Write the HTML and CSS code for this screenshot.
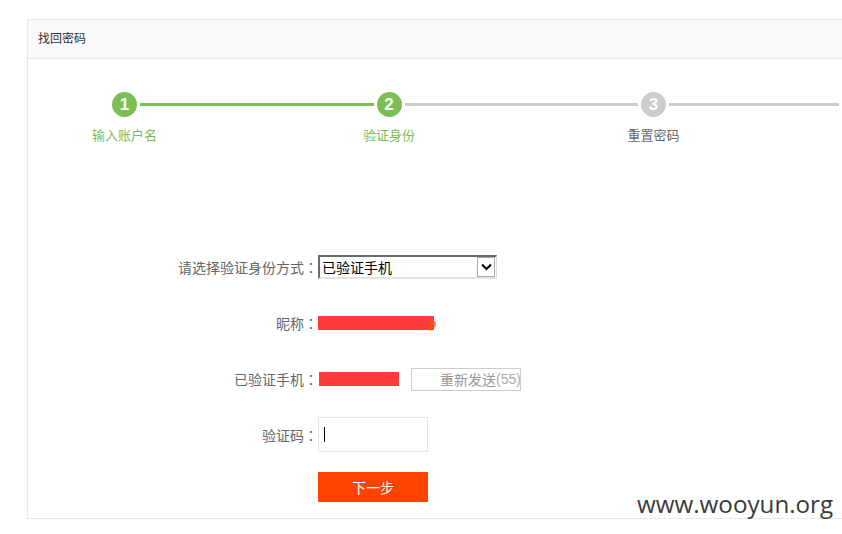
FILE: index.html
```html
<!DOCTYPE html>
<html lang="zh-CN">
<head>
<meta charset="utf-8">
<title>找回密码</title>
<link rel="stylesheet" href="styles.css">
</head>
<body>
<div class="page">
  <div class="panel">
    <div class="panel-head">找回密码</div>
    <div class="steps">
      <div class="step done">
        <div class="step-top"><span class="circle">1</span><span class="line"></span></div>
        <div class="step-label">输入账户名</div>
      </div>
      <div class="step current">
        <div class="step-top"><span class="circle">2</span><span class="line"></span></div>
        <div class="step-label">验证身份</div>
      </div>
      <div class="step todo last">
        <div class="step-top"><span class="circle">3</span><span class="line"></span></div>
        <div class="step-label">重置密码</div>
      </div>
    </div>
    <div class="form">
      <div class="row row-select">
        <div class="label">请选择验证身份方式<span class="colon" lang="ja">：</span></div>
        <div class="field">
          <div class="select">
            <span class="select-text">已验证手机</span>
            <span class="select-btn"><svg width="11" height="8" viewBox="0 0 11 8"><path d="M1 1.5 L5.5 6 L10 1.5" fill="none" stroke="#000" stroke-width="2"/></svg></span>
          </div>
        </div>
      </div>
      <div class="row row-nick">
        <div class="label">昵称<span class="colon" lang="ja">：</span></div>
        <div class="field"><span class="redact redact-nick"></span><span class="nick-tail">p</span></div>
      </div>
      <div class="row row-phone">
        <div class="label">已验证手机<span class="colon" lang="ja">：</span></div>
        <div class="field"><span class="redact redact-phone"></span><span class="resend">重新发送<span class="count">(55)</span></span></div>
      </div>
      <div class="row row-code">
        <div class="label">验证码<span class="colon" lang="ja">：</span></div>
        <div class="field"><span class="code-input"><span class="caret"></span></span></div>
      </div>
      <div class="row row-submit">
        <div class="label"></div>
        <div class="field"><span class="next-btn">下一步</span></div>
      </div>
    </div>
  </div>
</div>
<div class="watermark">www.wooyun.org</div>
</body>
</html>
```
FILE: styles.css
```css
* { box-sizing: border-box; }
html, body { margin: 0; padding: 0; }
body {
  background: #fff;
  font-family: "Liberation Sans", "Noto Sans CJK SC", sans-serif;
  overflow: hidden;
  width: 842px;
  height: 534px;
}
.page { padding: 19px 0 0 27px; }
.panel {
  border: 1px solid #e9e9e9;
  border-right: none;
  height: 500px;
}
.panel-head {
  height: 39px;
  line-height: 38px;
  background: #f9f9f9;
  border-bottom: 1px solid #e9e9e9;
  padding-left: 10px;
  font-size: 12px;
  color: #333;
}
.steps {
  display: flex;
  padding: 33px 0 0 84px;
}
.step { width: 264.5px; flex: none; }
.step.last { flex: 1; }
.step-top { display: flex; align-items: center; }
.circle {
  width: 25px;
  height: 25px;
  border-radius: 50%;
  display: flex;
  align-items: center;
  justify-content: center;
  color: #fff;
  font-weight: bold;
  font-size: 17px;
  flex: none;
}
.line { flex: 1; height: 3px; margin: 0 3px; }
.done .circle, .current .circle { background: #7cbd55; }
.done .line { background: #7cbd55; }
.current .line, .todo .line { background: #cccccc; }
.todo .circle { background: #cccccc; }
.step-label {
  width: 100px;
  margin-left: -37.5px;
  margin-top: 12px;
  text-align: center;
  font-size: 13px;
  line-height: 14px;
}
.done .step-label, .current .step-label { color: #7cbd55; }
.todo .step-label { color: #666; }

.form { margin-top: 112px; display: flex; flex-direction: column; }
.row {
  display: grid;
  grid-template-columns: 290px auto;
  align-items: center;
}
.label {
  text-align: right;
  font-size: 14px;
  color: #666;
}
.colon { font-family: "Noto Sans CJK JP", sans-serif; }
.field { display: flex; align-items: center; }
.row-select { height: 24px; margin-bottom: 32px; }
.row-nick { height: 24px; margin-bottom: 32px; }
.row-phone { height: 24px; margin-bottom: 26px; }
.row-code { height: 35px; margin-bottom: 20px; }
.row-submit { height: 30px; }

.select {
  width: 179px;
  height: 24px;
  display: flex;
  align-items: center;
  justify-content: space-between;
  border-top: 2px solid #6a6a6a;
  border-left: 2px solid #6a6a6a;
  border-right: 1px solid #dcdcdc;
  border-bottom: 2px solid #e3e3e3;
  background: #fff;
  padding-left: 2px;
}
.select-text { font-size: 14px; color: #000; }
.select-btn {
  width: 18px;
  height: 20px;
  border: 1px solid #a8a8a8;
  background: #fff;
  display: flex;
  align-items: center;
  justify-content: center;
  margin-right: 1px;
}
.redact { display: block; background: #fd3b3b; height: 14px; }
.redact-nick { width: 116px; }
.nick-tail {
  color: #f25c0d;
  font-size: 13px;
  line-height: 14px;
  margin-left: -5px;
  margin-top: 2px;
}
.redact-phone { width: 80px; margin-left: 1px; }
.resend {
  margin-left: 12px;
  width: 110px;
  height: 23px;
  border: 1px solid #ccc;
  background: #fff;
  color: #999;
  font-size: 14px;
  display: flex;
  align-items: center;
  justify-content: flex-start;
  padding-left: 28px;
  white-space: nowrap;
  overflow: hidden;
}
.count { color: #a8adb8; }
.code-input {
  width: 110px;
  height: 35px;
  border: 1px solid #e5e5e5;
  background: #fff;
  display: flex;
  align-items: center;
  padding-left: 5px;
}
.caret { width: 1px; height: 15px; background: #000; }
.next-btn {
  width: 110px;
  height: 30px;
  background: #ff4400;
  color: #fff;
  font-size: 14px;
  display: flex;
  align-items: center;
  justify-content: center;
}
.watermark {
  position: absolute;
  left: 637px;
  top: 492px;
  font-family: "Open Sans", sans-serif;
  font-size: 24.2px;
  line-height: 1;
  color: #3a3a3a;
}
```
